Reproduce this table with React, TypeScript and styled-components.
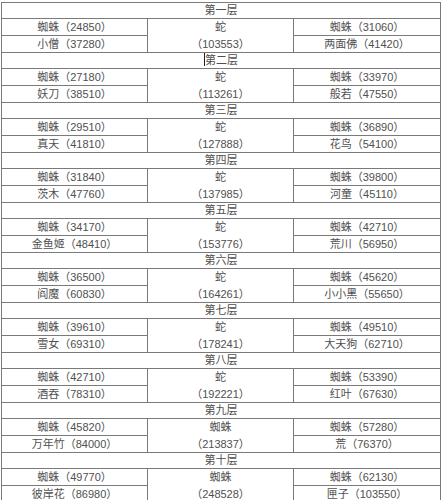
import styled, { createGlobalStyle } from "styled-components";

const GlobalStyle = createGlobalStyle`
    html, body {
        margin: 0;
        padding: 0;
        background: #ffffff;
    }
`;

const Page = styled.div`
    padding: 2px 0 0 1px;
    width: 441px;
    box-sizing: border-box;
`;

const Tabela = styled.table`
    width: 439px;
    table-layout: fixed;
    border-collapse: collapse;
    font-family: "Liberation Sans", "Noto Sans CJK SC", sans-serif;
    font-size: 11px;
    color: #505050;
`;

const Titulo = styled.td`
    height: 15px;
    padding: 0;
    border: 1px solid #7a7a7a;
    text-align: center;
    line-height: 15px;
    white-space: nowrap;
`;

const Celula = styled.td<{ $mid?: "top" | "bottom" }>`
    height: 16px;
    padding: 0;
    border: 1px solid #7a7a7a;
    text-align: center;
    line-height: 16px;
    white-space: nowrap;
    border-bottom-style: ${(p) => (p.$mid === "top" ? "hidden" : "solid")};
`;

const Cursor = styled.span`
    display: inline-block;
    width: 0;
    height: 13px;
    border-left: 1px solid #222;
    vertical-align: -2px;
`;

interface Camada {
    titulo: string
    esquerda: [string, string]
    meio: [string, string]
    direita: [string, string]
}

const camadas: Camada[] = [
    { titulo: "第一层", esquerda: ["蜘蛛（24850）", "小僧（37280）"], meio: ["蛇", "（103553）"], direita: ["蜘蛛（31060）", "两面佛（41420）"] },
    { titulo: "第二层", esquerda: ["蜘蛛（27180）", "妖刀（38510）"], meio: ["蛇", "（113261）"], direita: ["蜘蛛（33970）", "般若（47550）"] },
    { titulo: "第三层", esquerda: ["蜘蛛（29510）", "真天（41810）"], meio: ["蛇", "（127888）"], direita: ["蜘蛛（36890）", "花鸟（54100）"] },
    { titulo: "第四层", esquerda: ["蜘蛛（31840）", "茨木（47760）"], meio: ["蛇", "（137985）"], direita: ["蜘蛛（39800）", "河童（45110）"] },
    { titulo: "第五层", esquerda: ["蜘蛛（34170）", "金鱼姬（48410）"], meio: ["蛇", "（153776）"], direita: ["蜘蛛（42710）", "荒川（56950）"] },
    { titulo: "第六层", esquerda: ["蜘蛛（36500）", "阎魔（60830）"], meio: ["蛇", "（164261）"], direita: ["蜘蛛（45620）", "小小黑（55650）"] },
    { titulo: "第七层", esquerda: ["蜘蛛（39610）", "雪女（69310）"], meio: ["蛇", "（178241）"], direita: ["蜘蛛（49510）", "大天狗（62710）"] },
    { titulo: "第八层", esquerda: ["蜘蛛（42710）", "酒吞（78310）"], meio: ["蛇", "（192221）"], direita: ["蜘蛛（53390）", "红叶（67630）"] },
    { titulo: "第九层", esquerda: ["蜘蛛（45820）", "万年竹（84000）"], meio: ["蜘蛛", "（213837）"], direita: ["蜘蛛（57280）", "荒（76370）"] },
    { titulo: "第十层", esquerda: ["蜘蛛（49770）", "彼岸花（86980）"], meio: ["蜘蛛", "（248528）"], direita: ["蜘蛛（62130）", "匣子（103550）"] },
];

export default function App() {
    return (
        <>
            <GlobalStyle />
            <Page>
                <Tabela>
                    <colgroup>
                        <col style={{ width: 146 }} />
                        <col style={{ width: 146 }} />
                        <col style={{ width: 147 }} />
                    </colgroup>
                    <tbody>
                        {camadas.flatMap((c, i) => [
                            <tr key={`t${i}`}>
                                <Titulo colSpan={3}>
                                    {i === 1 && <Cursor />}
                                    {c.titulo}
                                </Titulo>
                            </tr>,
                            <tr key={`a${i}`}>
                                <Celula>{c.esquerda[0]}</Celula>
                                <Celula $mid="top">{c.meio[0]}</Celula>
                                <Celula>{c.direita[0]}</Celula>
                            </tr>,
                            <tr key={`b${i}`}>
                                <Celula>{c.esquerda[1]}</Celula>
                                <Celula $mid="bottom">{c.meio[1]}</Celula>
                                <Celula>{c.direita[1]}</Celula>
                            </tr>,
                        ])}
                    </tbody>
                </Tabela>
            </Page>
        </>
    );
}
